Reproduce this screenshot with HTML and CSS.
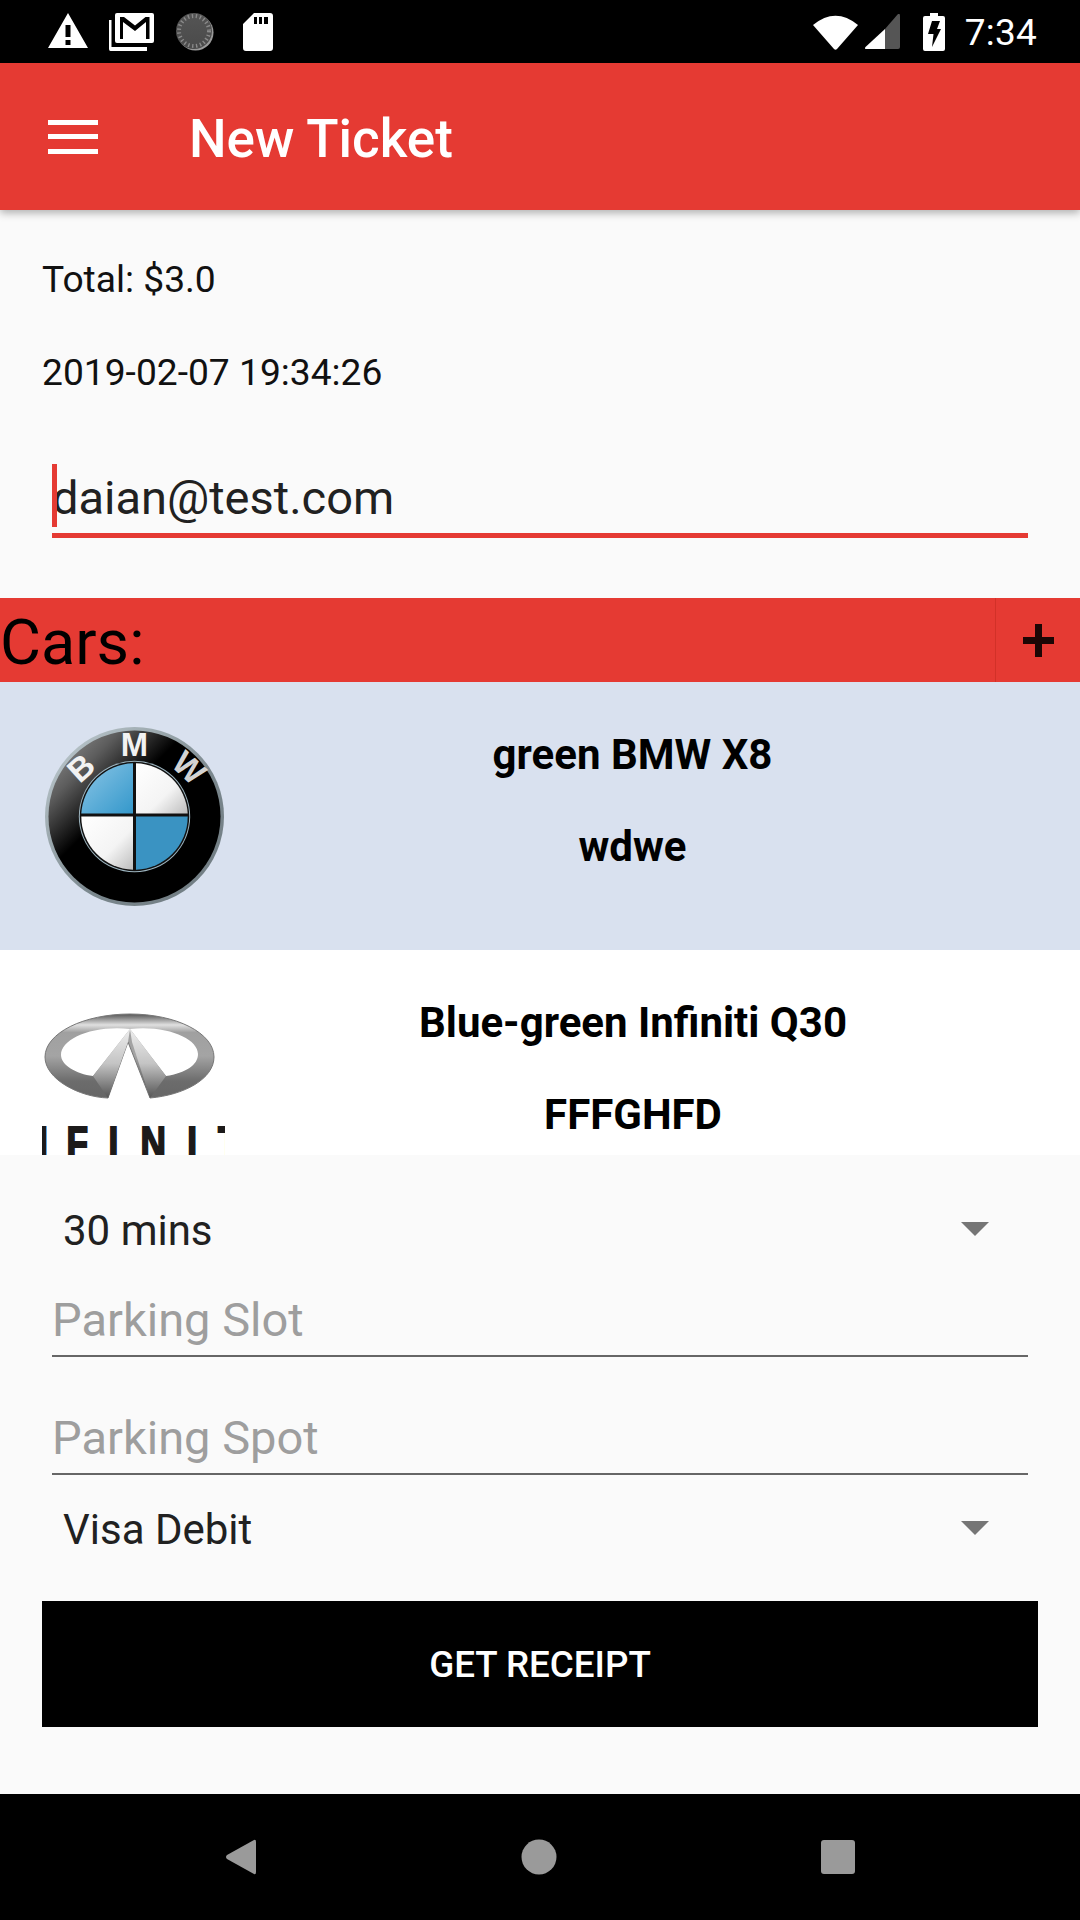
FILE: index.html
```html
<!DOCTYPE html>
<html lang="en">
<head>
<meta charset="utf-8">
<title>New Ticket</title>
<link rel="stylesheet" href="styles.css">
</head>
<body>
<div class="phone">
  <header class="statusbar">
    <div class="status-left">
      <svg class="ic-warn" viewBox="0 0 40 35"><path fill-rule="evenodd" fill="#fff" d="M20 0 L40 35 H0 Z M17.5 12 V24 H22.5 V12 Z M17.5 27 V32 H22.5 V27 Z"/></svg>
      <svg class="ic-mail" viewBox="0 0 45 38"><path fill="#fff" d="M8 0 H43 Q45 0 45 2 V28 Q45 30 43 30 H8 Q6 30 6 28 V2 Q6 0 8 0 Z"/><path fill="#000" d="M11 4 V26 H14 V9 L26 18 L37 9 V26 H40.5 V4 H36.5 L26 12.5 L15 4 Z"/><path fill="#fff" d="M0 7 H2.5 V34 H38 V38 H1.5 Q0 38 0 36 Z"/></svg>
      <svg class="ic-spin" viewBox="0 0 38 38"><defs><linearGradient id="sp" x1="0" y1="0" x2="0" y2="1"><stop offset="0" stop-color="#555"/><stop offset="1" stop-color="#4a4a4a"/></linearGradient></defs><circle cx="19.5" cy="19.5" r="18" fill="#999"/><circle cx="18" cy="18" r="18" fill="url(#sp)"/><circle cx="18" cy="18" r="15" fill="none" stroke="#8a8a8a" stroke-width="4" stroke-dasharray="1.4 2.6"/></svg>
      <svg class="ic-sd" viewBox="0 0 30 38"><path fill-rule="evenodd" fill="#fff" d="M11 0 H27 Q30 0 30 3 V35 Q30 38 27 38 H3 Q0 38 0 35 V11 Z M11 4 V11 H14 V4 Z M16 4 V11 H19 V4 Z M21 4 V11 H25 V4 Z"/></svg>
    </div>
    <div class="status-right">
      <svg class="ic-wifi" viewBox="0 0 45 36"><path fill="#fff" d="M0 11 Q22.5 -7.500 45 11 L24 35 Q22.500 36.500 21 35 Z"/></svg>
      <svg class="ic-signal" viewBox="0 0 35 35"><path fill="#555" d="M20 15 L33 0 Q35 -1 35 2 V33 Q35 35 33 35 H20 Z"/><path fill="#fff" d="M20 15 V35 H1.500 Q-1 35 0.500 33 Z"/></svg>
      <svg class="ic-batt" viewBox="0 0 22 38"><path fill-rule="evenodd" fill="#fff" d="M7 0 H15 V3 H20 Q22 3 22 5 V36 Q22 38 20 38 H2 Q0 38 0 36 V5 Q0 3 2 3 H7 Z M9 8 H17 L14 16 H18 L9 34 L10.500 21 H5 Z"/></svg>
      <span class="clock">7:34</span>
    </div>
  </header>

  <div class="toolbar">
    <div class="hamburger"><i></i><i></i><i></i></div>
    <h1 class="title">New Ticket</h1>
  </div>

  <main class="content">
    <div class="info">
      <p class="info-line">Total: $3.0</p>
      <p class="info-line">2019-02-07 19:34:26</p>
    </div>

    <div class="field field-email">
      <span class="cursor"></span>
      <span class="field-value">daian@test.com</span>
    </div>

    <div class="cars-bar">
      <span class="cars-label">Cars:</span>
      <span class="add-btn"><svg class="ic-plus" viewBox="0 0 31 33"><path fill="#1c0605" d="M12 0 H19 V13 H31 V20 H19 V33 H12 V20 H0 V13 H12 Z"/></svg></span>
    </div>

    <div class="car-list">
      <div class="car car-selected">
        <svg class="logo-bmw" viewBox="0 0 180 180">
          <defs>
            <linearGradient id="ring" x1="0" y1="0" x2="1" y2="1"><stop offset="0" stop-color="#c4d0d5"/><stop offset=".6" stop-color="#7a878d"/><stop offset="1" stop-color="#6f7a80"/></linearGradient>
            <linearGradient id="black" x1="0" y1="0" x2=".7" y2=".7"><stop offset="0" stop-color="#a0a0a0"/><stop offset=".3" stop-color="#5c5c5c"/><stop offset=".58" stop-color="#000"/></linearGradient>
            <linearGradient id="blue1" x1="0" y1="0" x2="1" y2="1"><stop offset="0" stop-color="#8cc6e6"/><stop offset="1" stop-color="#3498cb"/></linearGradient>
            <linearGradient id="white1" x1="0" y1="0" x2="1" y2="1"><stop offset="0" stop-color="#fff"/><stop offset=".6" stop-color="#f4f4f4"/><stop offset="1" stop-color="#bdbdbd"/></linearGradient>
          </defs>
          <circle cx="90" cy="90" r="90" fill="url(#ring)"/>
          <circle cx="90" cy="90" r="86.500" fill="url(#black)"/>
          <circle cx="90" cy="90" r="56" fill="#9fb7c2"/>
          <circle cx="90" cy="90" r="55" fill="#111"/>
          <path fill="url(#blue1)" d="M88.500 36.500 A53.500 53.500 0 0 0 36.500 87 H88.500 Z"/>
          <path fill="url(#white1)" d="M91.500 36.500 A53.500 53.500 0 0 1 143.500 87 H91.500 Z"/>
          <path fill="url(#white1)" d="M36.500 90 A53.500 53.500 0 0 0 88.500 143.500 V90 Z"/>
          <path fill="#3a93c2" d="M91.500 90 H143.500 A53.500 53.500 0 0 1 91.500 143.500 Z"/>
          <text class="bmw-letter" x="90" y="29" text-anchor="middle">M</text>
          <text class="bmw-letter" transform="translate(36 41) rotate(-42)" text-anchor="middle" y="11.500">B</text>
          <text class="bmw-letter" transform="translate(145 41) rotate(43)" text-anchor="middle" y="11.500" fill-opacity=".9">W</text>
        </svg>
        <div class="car-text">
          <p class="car-line">green BMW X8</p>
          <p class="car-line">wdwe</p>
        </div>
      </div>
      <div class="car">
        <svg class="logo-inf" viewBox="-2 0 183 150">
          <defs>
            <linearGradient id="chrome" x1="0" y1="0" x2="0" y2="1"><stop offset="0" stop-color="#555"/><stop offset=".05" stop-color="#8a8a8a"/><stop offset=".13" stop-color="#e0e0e0"/><stop offset=".22" stop-color="#a0a0a0"/><stop offset=".5" stop-color="#a4a4a4"/><stop offset=".8" stop-color="#6c6c6c"/><stop offset="1" stop-color="#666"/></linearGradient>
            <linearGradient id="peak" x1="0" y1="0" x2="0" y2="1"><stop offset="0" stop-color="#eee"/><stop offset=".5" stop-color="#c4c4c4"/><stop offset="1" stop-color="#555"/></linearGradient>
          </defs>
          <path fill="url(#chrome)" stroke="#777" stroke-width="1" d="M86 1 C40 1 1 20 1 44 C1 66 35 84 64 85 L84 29 L106 85 C140 82 170 66 170 44 C170 20 132 1 86 1 Z"/>
          <path fill="#fff" d="M86 16 C48 12 17 26 17 42 C17 52 32 61 49 63 L86 16 L122 63 C142 60 154 52 154 41 C154 26 124 12 86 16 Z"/>
          <path fill="url(#peak)" d="M86 16 L49 63 L64 85 L84 29 Z"/>
          <path fill="url(#peak)" d="M86 16 L122 63 L106 85 L88 29 Z"/>
          <text class="inf-word" transform="scale(.8 1)" y="145"><tspan x="-27">N</tspan><tspan x="28">F</tspan><tspan x="80.600">I</tspan><tspan x="120.600">N</tspan><tspan x="179">I</tspan><tspan x="217.500">T</tspan></text>
        </svg>
        <div class="car-text">
          <p class="car-line">Blue-green Infiniti Q30</p>
          <p class="car-line">FFFGHFD</p>
        </div>
      </div>
    </div>

    <div class="form">
      <div class="spinner spinner-first">
        <span>30 mins</span><i class="caret"></i>
      </div>
      <div class="field field-slot"><span class="field-value hint">Parking Slot</span></div>
      <div class="field field-spot"><span class="field-value hint">Parking Spot</span></div>
      <div class="spinner spinner-second">
        <span>Visa Debit</span><i class="caret"></i>
      </div>
      <button class="receipt" type="button">GET RECEIPT</button>
    </div>
  </main>

  <footer class="navbar">
    <svg class="nav-back" viewBox="0 0 32 36"><path fill="#9a9a9a" d="M29 1 Q31 0 31 3 V33 Q31 36 29 35 L2 20 Q0 18 2 16 Z"/></svg>
    <svg class="nav-home" viewBox="0 0 36 36"><circle cx="18" cy="18" r="17.500" fill="#9a9a9a"/></svg>
    <svg class="nav-recent" viewBox="0 0 34 34"><rect width="34" height="34" rx="3" fill="#9a9a9a"/></svg>
  </footer>
</div>
</body>
</html>
```
FILE: styles.css
```css
* { box-sizing: border-box; }
html, body { margin: 0; padding: 0; background: #fafafa; }
body { font-family: Roboto, "Noto Sans", sans-serif; color: #212121; }
p, h1 { margin: 0; }

.phone { width: 1080px; height: 1920px; display: flex; flex-direction: column; overflow: hidden; background: #fafafa; }

.statusbar { height: 63px; flex: none; background: #000; display: flex; justify-content: space-between; align-items: center; padding: 0 43px 0 48px; }
.status-left, .status-right { display: flex; align-items: center; }
.ic-warn { width: 40px; height: 35px; display: block; margin-right: 21px; margin-top: -3px; }
.ic-mail { width: 45px; height: 38px; display: block; margin-right: 22px; }
.ic-spin { width: 38px; height: 38px; display: block; margin-right: 29px; }
.ic-sd { width: 30px; height: 38px; display: block; }
.ic-wifi { width: 45px; height: 36px; display: block; margin-right: 7px; }
.ic-signal { width: 35px; height: 35px; display: block; margin-right: 23px; }
.ic-batt { width: 22px; height: 38px; display: block; margin-right: 20px; }
.clock { color: #fff; font-size: 37px; line-height: 38px; letter-spacing: .2px; padding-top: 2px; }

.toolbar { height: 147px; flex: none; background: #e53a33; display: flex; align-items: center; padding-left: 48px; box-shadow: 0 3px 8px rgba(0,0,0,.3); position: relative; z-index: 2; }
.hamburger { width: 50px; display: flex; flex-direction: column; gap: 9.500px; }
.hamburger i { display: block; height: 5px; background: #fff; }
.title { margin-left: 91px; padding-top: 4px; color: #fff; font-size: 53px; font-weight: 500; line-height: 62px; }

.content { flex: 1; display: flex; flex-direction: column; min-height: 0; }

.info { padding: 48px 42px 0; display: flex; flex-direction: column; gap: 50px; }
.info-line { font-size: 37.200px; line-height: 43px; color: #111; }

.field { margin: 0 52px; border-bottom: 2px solid #666; position: relative; }
.field-value { font-size: 47px; line-height: 56px; display: block; }
.hint { color: #9e9e9e; }
.field-email { margin-top: 70px; height: 74px; border-bottom: 5px solid #e53a33; padding: 6px 0 0; color: #212121; }
.cursor { position: absolute; left: 0; top: 0; width: 5px; height: 63px; background: #e53a33; }
.field-slot { margin-top: 31px; height: 70px; padding: 5px 0 0; }
.field-spot { margin-top: 48px; height: 70px; padding: 5px 0 0; }

.cars-bar { margin-top: 60px; height: 84px; flex: none; background: #e53a33; display: flex; justify-content: space-between; align-items: flex-start; }
.cars-label { font-size: 63px; line-height: 74px; padding-top: 8px; color: #000; }
.add-btn { width: 85px; height: 84px; border-left: 1px solid #d23128; display: flex; align-items: center; justify-content: center; }
.ic-plus { width: 31px; height: 33px; display: block; }

.car-list { height: 473px; flex: none; overflow: hidden; background: #fff; }
.car { height: 268px; display: flex; align-items: flex-start; }
.car-selected { background: #d9e1ef; }
.logo-bmw { width: 179px; height: 179px; flex: none; margin: 45px 1px 0 45px; }
.bmw-letter { font-family: "Liberation Sans", sans-serif; font-weight: 700; font-size: 33px; fill: #f2f2f2; }
.logo-inf { width: 183px; height: 150px; flex: none; margin: 63px 1px 0 42px; }
.inf-word { font-family: "Liberation Sans", sans-serif; font-weight: 700; font-size: 44px; fill: #1c1a1a; stroke: #1c1a1a; stroke-width: 2px; }
.car-text { flex: 1; display: flex; flex-direction: column; align-items: center; gap: 49px; padding-top: 51px; padding-right: 40px; }
.car-line { font-size: 42px; line-height: 43px; font-weight: 700; color: #000; }

.form { flex: 1; display: flex; flex-direction: column; background: #fafafa; }
.spinner { margin: 0 63px; display: flex; justify-content: space-between; align-items: center; font-size: 42px; line-height: 50px; color: #212121; padding-right: 28px; }
.spinner-first { margin-top: 51px; }
.spinner-second { margin-top: 30px; }
.caret { width: 0; height: 0; margin-bottom: 5px; border-left: 14px solid transparent; border-right: 14px solid transparent; border-top: 14px solid #757575; }
.receipt { margin: 46px 42px 0; height: 126px; background: #000; color: #fff; border: 0; border-radius: 0; font-family: Roboto, sans-serif; font-size: 36.750px; font-weight: 500; }

.navbar { height: 126px; flex: none; background: #000; display: flex; justify-content: space-between; align-items: center; padding: 0 225px; }
.nav-back { width: 32px; height: 36px; display: block; }
.nav-home { width: 36px; height: 36px; display: block; }
.nav-recent { width: 34px; height: 34px; display: block; }
```
